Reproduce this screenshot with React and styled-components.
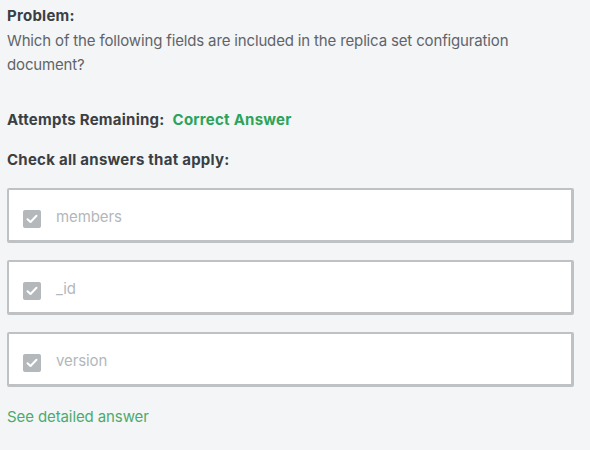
import React from "react";
import styled, { createGlobalStyle } from "styled-components";

const Global = createGlobalStyle`
  html, body { margin: 0; padding: 0; background: #f4f5f7; }
  body { font-family: Inter, Roboto, "Liberation Sans", sans-serif; }
`;

const Page = styled.div`
  width: 590px;
  height: 450px;
  box-sizing: border-box;
  padding: 6px 16px 0 7px;
  background: #f4f5f7;
  color: #3d4248;
`;

const Label = styled.div`
  font-size: 15px;
  font-weight: 700;
  line-height: 20px;
  letter-spacing: 0.25px;
  color: #3a3f44;
`;

const Question = styled.p`
  margin: 3px 0 0;
  font-size: 15px;
  line-height: 24px;
  letter-spacing: -0.15px;
  color: #5f6469;
`;

const Status = styled.div`
  margin-top: 33px;
  display: flex;
  gap: 8px;
  font-size: 15px;
  font-weight: 700;
  line-height: 20px;
  letter-spacing: 0.25px;
  color: #3a3f44;
`;

const Green = styled.span`
  color: #2ba45a;
`;

const Instruction = styled(Label)`
  margin-top: 20px;
`;

const List = styled.div`
  margin-top: 18px;
  display: flex;
  flex-direction: column;
  gap: 17px;
`;

const Card = styled.div`
  height: 55px;
  box-sizing: border-box;
  background: #fff;
  border: 2px solid #bfc2c5;
  border-right-width: 3px;
  border-bottom-width: 3px;
  border-radius: 2px;
  display: flex;
  align-items: center;
  padding: 3px 0 0 14px;
  gap: 15px;
`;

const Box = styled.span`
  width: 18px;
  height: 18px;
  border-radius: 2px;
  background: #b4b8bb;
  display: inline-flex;
  align-items: center;
  justify-content: center;
  margin-top: 4px;
`;

const Option = styled.span`
  font-size: 15px;
  color: #b3b7bb;
  line-height: 20px;
  letter-spacing: -0.1px;
`;

const Link = styled.a`
  display: inline-block;
  margin-top: 20px;
  font-size: 15px;
  letter-spacing: -0.1px;
  color: #4caa6e;
  text-decoration: none;
`;

const Check = () => (
  <svg width="12" height="10" viewBox="0 0 12 10">
    <path d="M1.5 5.2 L4.5 8 L10.5 1.8" fill="none" stroke="#fff" strokeWidth="2" strokeLinecap="round" strokeLinejoin="round" />
  </svg>
);

const options = ["members", "_id", "version"];

export default function App() {
  return (
    <Page>
      <Global />
      <Label>Problem:</Label>
      <Question>Which of the following fields are included in the replica set configuration document?</Question>
      <Status>
        <span>Attempts Remaining:</span>
        <Green>Correct Answer</Green>
      </Status>
      <Instruction>Check all answers that apply:</Instruction>
      <List>
        {options.map((o) => (
          <Card key={o}>
            <Box><Check /></Box>
            <Option>{o}</Option>
          </Card>
        ))}
      </List>
      <Link href="#">See detailed answer</Link>
    </Page>
  );
}
